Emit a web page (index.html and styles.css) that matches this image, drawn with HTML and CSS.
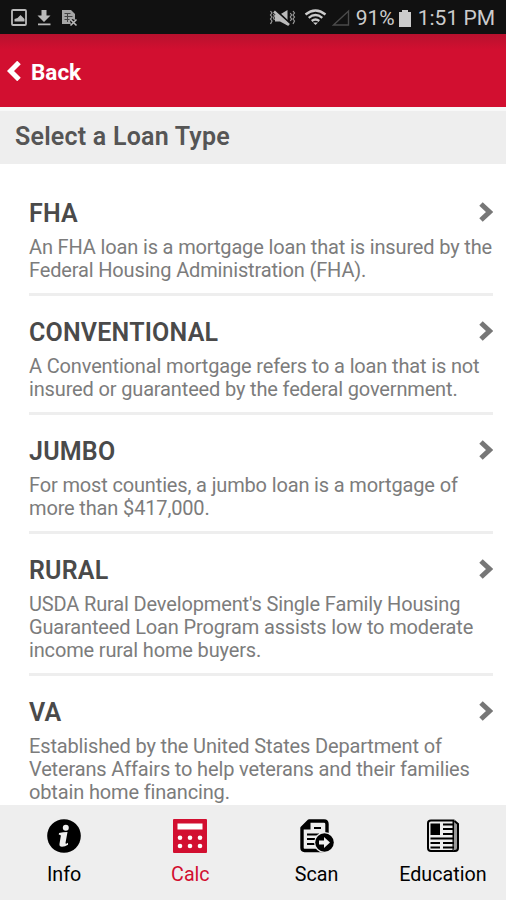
FILE: index.html
```html
<!DOCTYPE html>
<html lang="en">
<head>
    <meta charset="UTF-8">
    <title>Select a Loan Type</title>
    <link rel="stylesheet" href="styles.css">
</head>
<body>
<div class="screen">
    <div class="status">
        <svg class="notices" width="68" height="18" viewBox="0 0 68 18">
            <rect x="2" y="1" width="14" height="15" rx="1" fill="none" stroke="#bbb" stroke-width="1.8"/>
            <path d="M4.500 12.500V10l3-1 3-3 4 4v2.500z" fill="#bbb"/>
            <path d="M31.500 1h5v5.500h4L34 13l-6.500-6.500h4zM28 14.500h12.500v1.800H28z" fill="#bbb"/>
            <path d="M52 1h9l4 4v6l-3-1-2 2 1 3h-9z" fill="#a6a6a6"/>
            <path d="M54.500 4.500h6M54.500 7.500h8M54.500 10.500h5M57.500 4v9" stroke="#444" stroke-width="1"/>
            <path d="M60.500 10.500l6 6M66.500 10.500l-6 6" stroke="#bbb" stroke-width="1.600"/>
        </svg>
        <div class="right">
            <svg class="signals" width="82" height="18" viewBox="0 0 82 18">
                <path d="M6 5.500h5L18.500 1v15.500L11 12.500H6z" fill="#bbb"/>
                <path d="M6 .5l14 13" stroke="#111" stroke-width="2"/>
                <path d="M5 2.500l15 13.500" stroke="#bbb" stroke-width="2.600"/>
                <path d="M1.500 2l1.500 2-1.500 2L3 8l-1.500 2L3 12l-1.500 3M24 2l1.500 2L24 6l1.500 2-1.500 2 1.500 2-1.500 3M21.300 4l1.300 2-1.300 2 1.300 2-1.300 2M4.500 5l1 2-1 2 1 2" fill="none" stroke="#999" stroke-width="1.200"/>
                <path d="M36.500 5.500q10-8 20 0M39.700 8.800q6.800-5.500 13.600 0M42.700 12q3.800-3 7.600 0" fill="none" stroke="#ccc" stroke-width="2.300"/>
                <path d="M44 13.500h5L46.500 16z" fill="#ccc"/>
                <path d="M64.500 16L79.500 2v14z" fill="none" stroke="#4b4b4b" stroke-width="1.400"/>
            </svg>
            <span class="percent">91%</span>
            <svg class="battery" width="12" height="17" viewBox="0 0 12 17">
                <path d="M3 0h6v2h3v15H0V2h3z" fill="#ccc"/>
            </svg>
            <span class="time">1:51 PM</span>
        </div>
    </div>

    <div class="header">
        <svg width="14" height="20" viewBox="0 0 14 20">
            <path d="M12 1.500L3.500 10l8.500 8.500" fill="none" stroke="#fff" stroke-width="5"/>
        </svg>
        <span>Back</span>
    </div>

    <h1 class="title">Select a Loan Type</h1>

    <ul class="loans">
        <li>
            <h2>FHA</h2>
            <svg class="arrow" width="14" height="20" viewBox="0 0 14 20"><path d="M2 2l8.500 8L2 18"/></svg>
            <p>An FHA loan is a mortgage loan that is insured by the<br>Federal Housing Administration (FHA).</p>
        </li>
        <li>
            <h2>CONVENTIONAL</h2>
            <svg class="arrow" width="14" height="20" viewBox="0 0 14 20"><path d="M2 2l8.500 8L2 18"/></svg>
            <p>A Conventional mortgage refers to a loan that is not<br>insured or guaranteed by the federal government.</p>
        </li>
        <li>
            <h2>JUMBO</h2>
            <svg class="arrow" width="14" height="20" viewBox="0 0 14 20"><path d="M2 2l8.500 8L2 18"/></svg>
            <p>For most counties, a jumbo loan is a mortgage of<br>more than $417,000.</p>
        </li>
        <li>
            <h2>RURAL</h2>
            <svg class="arrow" width="14" height="20" viewBox="0 0 14 20"><path d="M2 2l8.500 8L2 18"/></svg>
            <p>USDA Rural Development's Single Family Housing<br>Guaranteed Loan Program assists low to moderate<br>income rural home buyers.</p>
        </li>
        <li>
            <h2>VA</h2>
            <svg class="arrow" width="14" height="20" viewBox="0 0 14 20"><path d="M2 2l8.500 8L2 18"/></svg>
            <p>Established by the United States Department of<br>Veterans Affairs to help veterans and their families<br>obtain home financing.</p>
        </li>
    </ul>

    <div class="tabs">
        <div class="tab">
            <svg width="34" height="34" viewBox="0 0 34 34">
                <circle cx="17" cy="17" r="16.800"/>
                <circle cx="18.800" cy="8.800" r="3" fill="#eee"/>
                <path d="M12 14q4-1 8.500-1l-2 11q0 1.500 2.500-.2v2q-3 2-6 2-3 0-2.500-3l1.300-7.800q.2-1.500-2-1.300z" fill="#eee"/>
            </svg>
            <span>Info</span>
        </div>
        <div class="tab current">
            <svg width="34" height="34" viewBox="0 0 34 34">
                <rect width="34" height="34" rx="1"/>
                <rect x="4.500" y="4.500" width="25" height="6" fill="#fff"/>
                <g fill="#fff">
                    <circle cx="7" cy="18.800" r="2.300"/><circle cx="17" cy="18.800" r="2.300"/><circle cx="27" cy="18.800" r="2.300"/>
                    <circle cx="7" cy="27" r="2.300"/><circle cx="17" cy="27" r="2.300"/><circle cx="27" cy="27" r="2.300"/>
                </g>
            </svg>
            <span>Calc</span>
        </div>
        <div class="tab">
            <svg width="34" height="34" viewBox="0 0 34 34">
                <path d="M9 2h15q3 0 3 3v24q0 2.500-3 2.500H4.500Q2 31.500 2 29V9z" fill="#eee" stroke="#000" stroke-width="3.400" stroke-linejoin="round"/>
                <path d="M10.500 2v8.500H2V9z"/>
                <path d="M14 9h7M7 15.500h12M7 20h8M7 25h8" stroke="#000" stroke-width="1.800"/>
                <circle cx="24.500" cy="23.500" r="10.500" fill="#eee"/>
                <circle cx="24.500" cy="23.500" r="9.300"/>
                <path d="M19 21.500h5V18l6 5.500-6 5.500v-3.500h-5z" fill="#eee"/>
            </svg>
            <span>Scan</span>
        </div>
        <div class="tab">
            <svg width="34" height="34" viewBox="0 0 34 34">
                <path d="M5 1.500h22.500V32H5q-3 0-3-3V4q0-2.500 3-2.500z" fill="#eee" stroke="#000" stroke-width="2"/>
                <path d="M28.500 2L32 5v24q0 3-3 3h-1.500" fill="#999" stroke="#000" stroke-width="2"/>
                <rect x="4.500" y="4.500" width="9.500" height="11.500"/>
                <path d="M17 5.500h11M17 10h11M17 15h11M4.500 19.500H28M4.500 24H14M17 24h11M4.500 28.500H14M17 28.500h11" stroke="#000" stroke-width="1.800"/>
            </svg>
            <span>Education</span>
        </div>
    </div>
</div>
</body>
</html>
```
FILE: styles.css
```css
* {
    padding: 0;
    margin: 0;
    list-style: none;
    box-sizing: border-box;
}

body {
    font-family: Roboto, "Liberation Sans", sans-serif;
    background: #fff;
}

.screen {
    height: 900px;
    display: flex;
    flex-direction: column;
    overflow: hidden;
    white-space: nowrap;
}

.status {
    flex: none;
    height: 34px;
    padding: 2px 11px 0 10px;
    background: #111;
    color: #ccc;
    display: flex;
    align-items: center;
    justify-content: space-between;
    font-size: 21px;
}

.right {
    display: flex;
    align-items: center;
}

.percent {
    margin-left: 5px;
}

.battery {
    margin: 0 7px 0 4px;
}

.header {
    flex: none;
    height: 73px;
    padding: 0 0 0 7px;
    display: flex;
    align-items: center;
    gap: 10px;
    background: linear-gradient(#b8112e, #d20f30 16px);
    color: #fff;
    font-size: 22.500px;
    font-weight: 700;
}

.header span {
    padding-top: 2px;
}

.title {
    flex: none;
    height: 57px;
    padding-left: 15px;
    border-top: 4px solid #f8f8f8;
    background: #eee;
    color: #555;
    font-size: 25px;
    line-height: 52px;
    font-weight: 600;
    letter-spacing: 0.22px;
}

.loans {
    flex: 1;
    min-height: 0;
    overflow: hidden;
    padding: 13px 13px 0 29px;
}

.loans li {
    display: grid;
    grid-template-columns: 1fr 14px;
    padding: 21px 0 11px;
    border-bottom: 3px solid #eee;
}

.loans h2 {
    height: 38px;
    line-height: 31px;
    font-size: 25px;
    font-weight: 600;
    letter-spacing: 0.2px;
    color: #4a4a4a;
}

.arrow {
    margin-top: 4px;
}

.arrow path {
    fill: none;
    stroke: #777;
    stroke-width: 5;
}

.loans p {
    grid-column: 1 / 3;
    font-size: 20px;
    line-height: 23px;
    letter-spacing: -0.15px;
    color: #7c7c7c;
}

.tabs {
    flex: none;
    height: 95px;
    padding-left: 1px;
    background: #eee;
    display: grid;
    grid-template-columns: repeat(4, 1fr);
}

.tab {
    padding-top: 14px;
    display: flex;
    flex-direction: column;
    align-items: center;
    gap: 10px;
    font-size: 19.700px;
    line-height: 24px;
}

.tab.current {
    color: #d20f30;
    fill: #d20f30;
}
```
